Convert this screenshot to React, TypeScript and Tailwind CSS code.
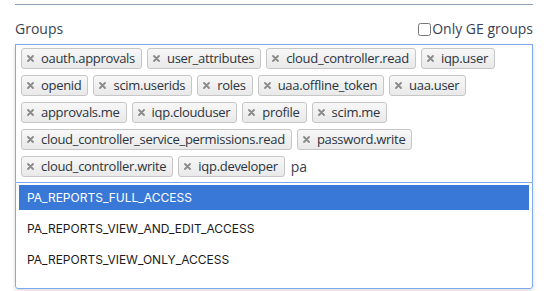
import { useState } from "react";

const tags = [
    "oauth.approvals",
    "user_attributes",
    "cloud_controller.read",
    "iqp.user",
    "openid",
    "scim.userids",
    "roles",
    "uaa.offline_token",
    "uaa.user",
    "approvals.me",
    "iqp.clouduser",
    "profile",
    "scim.me",
    "cloud_controller_service_permissions.read",
    "password.write",
    "cloud_controller.write",
    "iqp.developer",
];

const options = [
    "PA_REPORTS_FULL_ACCESS",
    "PA_REPORTS_VIEW_AND_EDIT_ACCESS",
    "PA_REPORTS_VIEW_ONLY_ACCESS",
];

const Tag = ({ label }: { label: string }) => (
    <span
        className="
            flex items-center h-[21px] pl-[5px] pr-[6px] gap-[7px]
            border border-[#c6c6c6] rounded-[3px]
            bg-gradient-to-b from-[#f7f7f7] to-[#e9e9e9]
            text-[#2b3440]
        "
    >
        <svg width="7" height="7" viewBox="0 0 7 7" className="shrink-0">
            <path d="M1 1L6 6M6 1L1 6" stroke="#8a8a8a" strokeWidth="1.8" strokeLinecap="round" />
        </svg>
        <span className="leading-none tracking-[-0.3px]">{label}</span>
    </span>
);

const App = () => {
    const [onlyGe, setOnlyGe] = useState(false);

    return (
        <div className="w-[548px] h-[291px] bg-white font-['Open_Sans',sans-serif] text-[13px] px-[15px] pt-[4px]">
            <div className="border-t border-[#8ea0b4] w-[518px]" />

            <div className="flex items-end justify-between mt-[16px] w-[518px]">
                <span className="text-[#3a4250] text-[14px] leading-[16px]">Groups</span>
                <label className="flex items-center text-[#3a4250] text-[14px] leading-[16px]">
                    <input
                        type="checkbox"
                        checked={onlyGe}
                        onChange={() => setOnlyGe(!onlyGe)}
                        className="w-[13px] h-[13px] m-0 mr-[1px]"
                    />
                    Only GE groups
                </label>
            </div>

            <div className="w-[518px] mt-[7px] shadow-[0_2px_4px_rgba(0,0,0,0.15)] rounded-b-[3px]">
                <div className="border border-b-0 border-[#7fa9ee] pl-[5px] pr-[4px] pt-[3px] pb-[5px] flex flex-wrap gap-x-[5px] gap-y-[6px]">
                    {tags.map((t) => (
                        <Tag key={t} label={t} />
                    ))}
                    <span className="flex items-center h-[21px] text-[#3a4250] text-[14px] pl-[1px]">pa</span>
                </div>

                <ul className="border border-[#7fa9ee] rounded-b-[3px] bg-white px-[3px] pt-[2px] pb-[10px] font-['Inter',sans-serif] text-[12px]">
                    {options.map((o, i) => (
                        <li
                            key={o}
                            className={
                                i === 0
                                    ? "h-[25px] flex items-center px-[8px] bg-[#3a78d8] text-white mb-[6px]"
                                    : "h-[25px] flex items-center px-[8px] text-[#1b1b1b] mb-[6px]"
                            }
                        >
                            {o}
                        </li>
                    ))}
                </ul>
            </div>
        </div>
    );
};

export default App;
